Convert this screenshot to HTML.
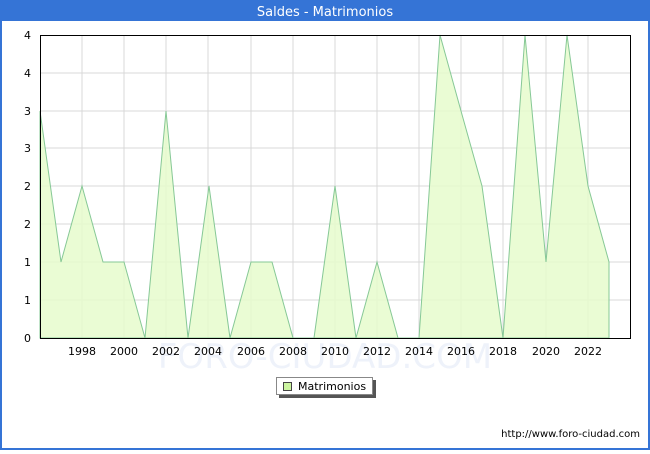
<!DOCTYPE html>
<html><head><meta charset="utf-8"><style>
body{margin:0;width:650px;height:450px;overflow:hidden;font-family:"DejaVu Sans","Liberation Sans",sans-serif;}
</style></head><body>
<svg width="650" height="450" xmlns="http://www.w3.org/2000/svg" font-family="DejaVu Sans, Liberation Sans, sans-serif">
<rect x="0" y="0" width="650" height="450" fill="#3574d6"/>
<rect x="2" y="21" width="646" height="427" fill="#fff"/>
<text x="325" y="16" fill="#fff" font-size="13" text-anchor="middle">Saldes - Matrimonios</text>
<g stroke="#d8d8d8" stroke-width="1">
<line x1="40" y1="300" x2="630" y2="300"/><line x1="40" y1="262" x2="630" y2="262"/><line x1="40" y1="224" x2="630" y2="224"/><line x1="40" y1="186" x2="630" y2="186"/><line x1="40" y1="148" x2="630" y2="148"/><line x1="40" y1="111" x2="630" y2="111"/><line x1="40" y1="73" x2="630" y2="73"/>
<line x1="82" y1="35" x2="82" y2="338"/><line x1="124" y1="35" x2="124" y2="338"/><line x1="166" y1="35" x2="166" y2="338"/><line x1="208" y1="35" x2="208" y2="338"/><line x1="251" y1="35" x2="251" y2="338"/><line x1="293" y1="35" x2="293" y2="338"/><line x1="335" y1="35" x2="335" y2="338"/><line x1="377" y1="35" x2="377" y2="338"/><line x1="419" y1="35" x2="419" y2="338"/><line x1="461" y1="35" x2="461" y2="338"/><line x1="503" y1="35" x2="503" y2="338"/><line x1="546" y1="35" x2="546" y2="338"/><line x1="588" y1="35" x2="588" y2="338"/>
</g>
<text x="325" y="368" fill="#eef2fa" font-size="34" text-anchor="middle">FORO-CIUDAD.COM</text>
<polygon fill="#e6fccc" fill-opacity="0.85" stroke="#86c896" stroke-width="1" points="40,338 40,111 61,262 82,186 103,262 124,262 145,338 166,111 188,338 209,186 230,338 251,262 272,262 293,338 314,338 335,186 356,338 377,262 398,338 419,338 440,35 461,111 482,186 503,338 525,35 546,262 567,35 588,186 609,262 609,338"/>
<rect x="40.5" y="35.5" width="590" height="303" fill="none" stroke="#000"/>
<g font-size="11" fill="#000" text-anchor="end">
<text x="31" y="342">0</text><text x="31" y="304">1</text><text x="31" y="266">1</text><text x="31" y="228">2</text><text x="31" y="190">2</text><text x="31" y="152">3</text><text x="31" y="115">3</text><text x="31" y="77">4</text><text x="31" y="39">4</text>
</g>
<g font-size="11" fill="#000" text-anchor="middle">
<text x="82" y="355">1998</text><text x="124" y="355">2000</text><text x="166" y="355">2002</text><text x="208" y="355">2004</text><text x="251" y="355">2006</text><text x="293" y="355">2008</text><text x="335" y="355">2010</text><text x="377" y="355">2012</text><text x="419" y="355">2014</text><text x="461" y="355">2016</text><text x="503" y="355">2018</text><text x="546" y="355">2020</text><text x="588" y="355">2022</text>
</g>
<rect x="279" y="380" width="97" height="18" fill="#555"/>
<rect x="276.5" y="377.5" width="96" height="17" fill="#fff" stroke="#888"/>
<rect x="283.5" y="382.5" width="8" height="8" fill="#ccf5a0" stroke="#444"/>
<text x="298" y="390" font-size="11">Matrimonios</text>
<text x="640" y="437" font-size="10" text-anchor="end">http://www.foro-ciudad.com</text>
</svg>
</body></html>
